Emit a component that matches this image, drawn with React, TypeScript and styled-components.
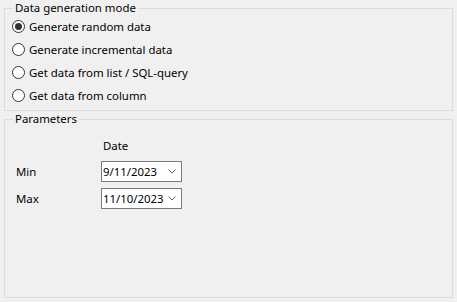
import React, { useState } from "react";
import styled, { createGlobalStyle } from "styled-components";

const GlobalStyle = createGlobalStyle`
  html, body {
    margin: 0;
    padding: 0;
    background: #f0f0f0;
  }
  body {
    font-family: "Noto Sans", "Open Sans", "Liberation Sans", sans-serif;
    font-size: 11.4px;
    color: #000;
  }
`;

const Page = styled.div`
  display: flex;
  flex-direction: column;
  width: 457px;
  height: 302px;
  box-sizing: border-box;
  padding: 0 4px 4px 4px;
`;

const GroupBox = styled.fieldset<{ $grow?: boolean }>`
  margin: 0;
  border: 1px solid #dcdcdc;
  padding: 0 7px 3px 7px;
  min-width: 0;
  ${({ $grow }) => ($grow ? "flex: 1;" : "")}
`;

const Caption = styled.legend`
  margin-left: 1px;
  padding: 0 2px;
  line-height: 16px;
  height: 16px;
`;

const RadioList = styled.div`
  display: flex;
  flex-direction: column;
  margin-top: -1px;
`;

const RadioRow = styled.label`
  display: flex;
  align-items: center;
  gap: 4px;
  height: 23px;
  cursor: default;
`;

const RadioCircle = styled.span<{ $checked: boolean }>`
  position: relative;
  width: 13px;
  height: 13px;
  box-sizing: border-box;
  border: 1px solid #333;
  border-radius: 50%;
  background: #fff;
  flex: none;

  &::after {
    content: "";
    display: ${({ $checked }) => ($checked ? "block" : "none")};
    position: absolute;
    left: 2px;
    top: 2px;
    width: 7px;
    height: 7px;
    border-radius: 50%;
    background: #333;
  }
`;

const ParamGrid = styled.div`
  display: grid;
  grid-template-columns: 85px 81px;
  grid-template-rows: 17px 21px 21px;
  row-gap: 6px;
  padding-top: 11px;
  padding-left: 4px;
  align-items: center;
`;

const HeaderCell = styled.div`
  grid-column: 2;
  padding-left: 2px;
  line-height: 16px;
  align-self: start;
`;

const RowLabel = styled.div`
  grid-column: 1;
`;

const DateBox = styled.div`
  grid-column: 2;
  display: flex;
  align-items: center;
  justify-content: space-between;
  height: 21px;
  box-sizing: border-box;
  border: 1px solid #7a7a7a;
  background: #fff;
  padding: 0 5px 0 1px;
`;

const Chevron = () => (
  <svg width="8" height="5" viewBox="0 0 8 5" fill="none">
    <path d="M0.5 0.5 L4 4 L7.5 0.5" stroke="#606060" strokeWidth="1" />
  </svg>
);

const modes = [
  "Generate random data",
  "Generate incremental data",
  "Get data from list / SQL-query",
  "Get data from column",
];

export default function App() {
  const [mode, setMode] = useState(0);
  return (
    <>
      <GlobalStyle />
      <Page>
        <GroupBox>
          <Caption>Data generation mode</Caption>
          <RadioList>
            {modes.map((m, i) => (
              <RadioRow key={m} onClick={() => setMode(i)}>
                <RadioCircle $checked={mode === i} />
                {m}
              </RadioRow>
            ))}
          </RadioList>
        </GroupBox>
        <GroupBox $grow>
          <Caption>Parameters</Caption>
          <ParamGrid>
            <HeaderCell>Date</HeaderCell>
            <RowLabel>Min</RowLabel>
            <DateBox>
              9/11/2023
              <Chevron />
            </DateBox>
            <RowLabel>Max</RowLabel>
            <DateBox>
              11/10/2023
              <Chevron />
            </DateBox>
          </ParamGrid>
        </GroupBox>
      </Page>
    </>
  );
}
